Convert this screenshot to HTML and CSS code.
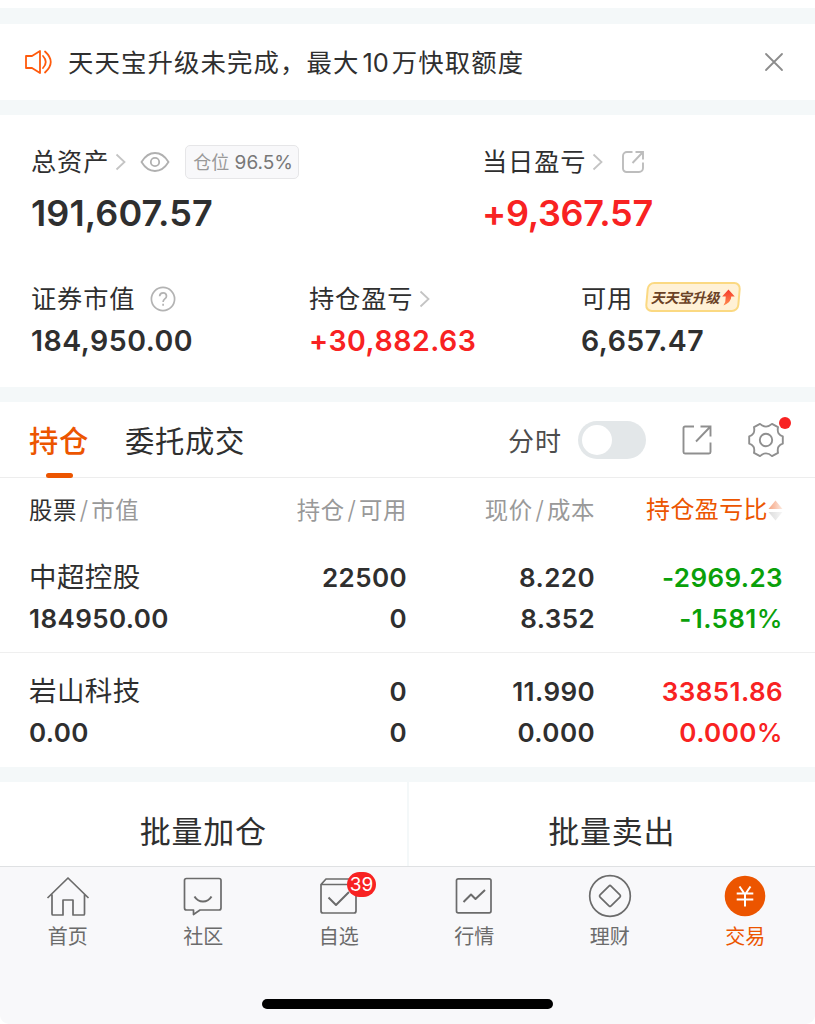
FILE: index.html
```
<!DOCTYPE html>
<html lang="zh-CN">
<head>
  <meta charset="UTF-8">
  <meta name="viewport" content="width=device-width, initial-scale=1.0">
  <title>交易</title>
  <link rel="stylesheet" href="styles.css">
</head>
<body>
  <div class="page">
    <!-- Notice -->
    <div class="notice">
      <svg class="notice-icon" width="28" height="26" viewBox="0 0 28 26" fill="none" stroke="#ff5a0c" stroke-width="1.8" stroke-linecap="round" stroke-linejoin="round">
        <path d="M2 7h6l8-5v22l-8-5H2z"/>
        <path d="M19 7q5.500 6 0 12M21 2.500q11.500 10.500 0 21"/>
      </svg>
      <span class="notice-text">天天宝升级未完成，最大<span class="notice-num">10</span>万快取额度</span>
      <svg class="notice-close" width="20" height="20" viewBox="0 0 20 20" stroke="#8c8c8c" stroke-width="1.8" stroke-linecap="round">
        <path d="M2 2l16 16M18 2L2 18"/>
      </svg>
    </div>

    <!-- Assets -->
    <div class="assets">
      <div class="assets-top">
        <div class="asset">
          <div class="label">
            总资产
            <svg class="arrow" width="12" height="18" viewBox="0 0 12 18" fill="none" stroke="#c4c4c4" stroke-width="1.8"><path d="M1.500 1.500L9.500 9l-8 7.500"/></svg>
            <svg class="eye" width="30" height="22" viewBox="0 0 30 22" fill="none" stroke="#b0b0b0" stroke-width="1.800">
              <path d="M1.500 11Q7 2 15 2t13.500 9Q23 20 15 20T1.500 11z"/>
              <circle cx="15" cy="11" r="4.200"/>
            </svg>
            <span class="ratio"><span class="ratio-name">仓位</span> 96.5%</span>
          </div>
          <div class="value big">191,607.57</div>
        </div>
        <div class="asset">
          <div class="label">
            当日盈亏
            <svg class="arrow" width="12" height="18" viewBox="0 0 12 18" fill="none" stroke="#c4c4c4" stroke-width="1.8"><path d="M1.500 1.500L9.500 9l-8 7.500"/></svg>
            <svg class="share" width="24" height="24" viewBox="0 0 24 24" fill="none" stroke="#bdbdbd" stroke-width="1.900">
              <path d="M11.500 2H6a4 4 0 0 0-4 4v12.500a3.500 3.500 0 0 0 3.500 3.500H18a4 4 0 0 0 4-4v-5.500M11.500 13L21.500 2.500M14.500 2H22v7.500"/>
            </svg>
          </div>
          <div class="value big profit up">+9,367.57</div>
        </div>
      </div>
      <div class="assets-bottom">
        <div class="asset">
          <div class="label">
            证券市值
            <svg class="help" width="26" height="26" viewBox="0 0 26 26" fill="none" stroke="#b3b3b3" stroke-width="1.7">
              <circle cx="13" cy="13" r="11.600"/>
              <path d="M9.600 10.200q.3-3.400 3.500-3.400t3.400 3.200q0 1.600-1.700 2.900T13.100 16"/>
              <path d="M13.100 17.700v2"/>
            </svg>
          </div>
          <div class="value">184,950.00</div>
        </div>
        <div class="asset">
          <div class="label">
            持仓盈亏
            <svg class="arrow" width="12" height="18" viewBox="0 0 12 18" fill="none" stroke="#c4c4c4" stroke-width="1.8"><path d="M1.500 1.500L9.500 9l-8 7.500"/></svg>
          </div>
          <div class="value up">+30,882.63</div>
        </div>
        <div class="asset">
          <div class="label">
            可用
            <span class="upgrade">
              <span class="upgrade-text">天天宝升级</span>
              <svg width="13" height="17" viewBox="0 0 13 17">
                <defs><linearGradient id="up" x1="0" y1="0" x2="0" y2="1"><stop offset="0" stop-color="#f53a2c"/><stop offset="1" stop-color="#ff8a4c"/></linearGradient></defs>
                <path fill="url(#up)" d="M6.500 .5L12.800 7.500H9.300Q9.500 13 1.500 16.500 4 13 3.800 7.500H.2z"/>
              </svg>
            </span>
          </div>
          <div class="value">6,657.47</div>
        </div>
      </div>
    </div>

    <!-- Positions -->
    <div class="positions">
      <div class="tabs">
        <span class="tab active">持仓</span>
        <span class="tab">委托成交</span>
        <div class="tools">
          <span class="tools-text">分时</span>
          <span class="switch"></span>
          <svg class="export" width="30" height="30" viewBox="0 0 30 30" fill="none" stroke="#8f8f8f" stroke-width="1.900">
            <path d="M12 1.500H3A1.500 1.500 0 0 0 1.500 3v24A1.500 1.500 0 0 0 3 28.500h24a1.500 1.500 0 0 0 1.500-1.500v-9.500M14 16.500L28 2M18.500 1.500h10v10"/>
          </svg>
          <span class="gear">
            <svg width="36" height="36" viewBox="0 0 36 36" fill="none" stroke="#8f8f8f" stroke-width="1.900" stroke-linejoin="round">
              <path d="M12 1.900Q15 4.600 18 4.600t6-2.700L30 5.100Q29.200 9.500 30.700 11.600 32 13.600 34.800 14.300v7.400Q32 22.400 30.700 24.400 29.200 26.500 30 30.900L24 34.100Q21 31.400 18 31.400t-6 2.700L6 30.900Q6.800 26.500 5.300 24.400 4 22.400 1.200 21.700v-7.400Q4 13.600 5.300 11.600 6.800 9.500 6 5.100z"/>
              <circle cx="18" cy="18" r="6.200"/>
            </svg>
            <i class="dot"></i>
          </span>
        </div>
      </div>

      <div class="row head">
        <span class="name"><b>股票</b><em>/</em>市值</span>
        <span>持仓<em>/</em>可用</span>
        <span>现价<em>/</em>成本</span>
        <span class="sort">持仓盈亏比
          <svg width="15" height="21" viewBox="0 0 15 21">
            <defs>
              <linearGradient id="s1"><stop offset="0" stop-color="#f5a583"/><stop offset="1" stop-color="#fde9df"/></linearGradient>
              <linearGradient id="s2"><stop offset="0" stop-color="#dcdcdc"/><stop offset="1" stop-color="#f6f6f6"/></linearGradient>
            </defs>
            <path fill="url(#s1)" d="M7.500 .5L14.500 9H.5z"/>
            <path fill="url(#s2)" d="M.5 12h14l-7 8.500z"/>
          </svg>
        </span>
      </div>

      <div class="row stock">
        <div class="name"><p class="cn">中超控股</p><p>184950.00</p></div>
        <div><p>22500</p><p>0</p></div>
        <div><p>8.220</p><p>8.352</p></div>
        <div class="down"><p>-2969.23</p><p>-1.581<span class="percent">%</span></p></div>
      </div>
      <div class="row stock">
        <div class="name"><p class="cn">岩山科技</p><p>0.00</p></div>
        <div><p>0</p><p>0</p></div>
        <div><p>11.990</p><p>0.000</p></div>
        <div class="up"><p>33851.86</p><p>0.000<span class="percent">%</span></p></div>
      </div>
    </div>

    <div class="batch">
      <span class="batch-btn">批量加仓</span>
      <span class="batch-btn">批量卖出</span>
    </div>

    <!-- Bottom bar -->
    <div class="tabbar">
      <div class="nav">
        <div class="nav-item">
          <svg width="44" height="44" viewBox="0 0 44 44" fill="none" stroke="#6b6b6b" stroke-width="1.700" stroke-linejoin="round">
            <path d="M1.500 24L22 4l20.500 20M6 20.500V40q0 1 1 1h10V26h10v15h10.500q1 0 1-1V20.500"/>
          </svg>
          <span>首页</span>
        </div>
        <div class="nav-item">
          <svg width="44" height="44" viewBox="0 0 44 44" fill="none" stroke="#6b6b6b" stroke-width="1.700" stroke-linejoin="round">
            <path d="M5.500 4.500h32.500q2 0 2 2v27.500q0 2-2 2H19L12.500 40.500V36h-7q-2 0-2-2V6.500q0-2 2-2z"/>
            <path stroke-width="2" d="M13.500 22.500q3 5 8.500 5t8.500-5"/>
          </svg>
          <span>社区</span>
        </div>
        <div class="nav-item">
          <svg width="44" height="44" viewBox="0 0 44 44" fill="none" stroke="#6b6b6b" stroke-width="1.700" stroke-linejoin="round">
            <path d="M4 10.500h35V37q0 2-2 2H6q-2 0-2-2V10.500L9 5h25.500l4.500 5.500"/>
            <path stroke-width="2" d="M11.500 23.500l7.500 7.500 13-13"/>
          </svg>
          <span>自选</span>
          <i class="badge">39</i>
        </div>
        <div class="nav-item">
          <svg width="44" height="44" viewBox="0 0 44 44" fill="none" stroke="#6b6b6b" stroke-width="1.700" stroke-linejoin="round">
            <rect x="4.500" y="4.800" width="34.500" height="34" rx="1.800"/>
            <path stroke-width="2" d="M11.500 28l7.500-7.500 4.500 4.500 9.500-9"/>
          </svg>
          <span>行情</span>
        </div>
        <div class="nav-item">
          <svg width="44" height="44" viewBox="0 0 44 44" fill="none" stroke="#6b6b6b" stroke-width="1.700">
            <circle cx="22" cy="22" r="20.300"/>
            <rect x="14.200" y="14.200" width="15.600" height="15.600" rx="1.500" transform="rotate(45 22 22)"/>
          </svg>
          <span>理财</span>
        </div>
        <div class="nav-item active">
          <svg width="44" height="44" viewBox="0 0 44 44" fill="none" stroke="#fff" stroke-width="2">
            <circle cx="22" cy="22" r="20.300" fill="#ec5500" stroke="none"/>
            <path d="M16.500 12.500l5.500 8 5.500-8M13.700 19.500h16.600M13.700 25.500h16.600M22 19.500v13"/>
          </svg>
          <span>交易</span>
        </div>
      </div>
      <div class="home-indicator"></div>
    </div>
  </div>
</body>
</html>
```
FILE: styles.css
```
* {
  box-sizing: border-box;
}

body {
  margin: 0;
  background: #fff;
  color: #2f2f2f;
  font-family: Inter, "Noto Sans CJK SC", sans-serif;
  overflow: hidden;
}

p {
  margin: 0;
}

i, em {
  font-style: normal;
}

svg {
  display: block;
  flex: none;
}

.page {
  height: 1024px;
  padding-top: 8px;
  display: flex;
  flex-direction: column;
}

/* Notice */
.notice {
  height: 107px;
  border-top: 16px solid #f4f8f9;
  border-bottom: 15px solid #f4f8f9;
  padding: 0 31px 0 24px;
  display: flex;
  align-items: center;
}

.notice-text {
  margin-left: 16px;
  padding-top: 2px;
  font-size: 25.4px;
  letter-spacing: 1.1px;
  line-height: 36px;
  white-space: nowrap;
}

.notice-num {
  margin: 0 3px;
  letter-spacing: 0;
}

.notice-close {
  margin-left: auto;
}

/* Assets */
.assets {
  height: 287px;
  padding: 28px 0 0 31px;
  border-bottom: 15px solid #f4f8f9;
}

.assets-top, .assets-bottom {
  display: grid;
}

.assets-top {
  grid-template-columns: 451px 1fr;
}

.assets-bottom {
  grid-template-columns: 278px 272px 1fr;
  margin-top: 33px;
}

.label {
  height: 36px;
  padding-top: 1px;
  display: flex;
  align-items: center;
  font-size: 25.2px;
  letter-spacing: 0.9px;
  line-height: 36px;
  white-space: nowrap;
}

.arrow {
  margin-left: 6px;
}

.eye {
  margin-left: 13px;
}

.share {
  margin-left: 17px;
}

.help {
  margin-left: 15px;
}

.ratio {
  height: 34px;
  margin-left: 15px;
  padding: 0 5px 0 7px;
  border: 1.5px solid #e6e6e8;
  border-radius: 5px;
  background: #f8f8fa;
  color: #777;
  font-size: 19px;
  letter-spacing: 0;
  line-height: 33px;
}

.ratio-name {
  color: #999;
  font-size: 18px;
}

.value {
  height: 48px;
  font-size: 28.5px;
  font-weight: 600;
  letter-spacing: 0.5px;
  line-height: 49px;
}

.value.big {
  height: 68px;
  font-size: 36px;
  letter-spacing: 0.1px;
  line-height: 68px;
}

.value.profit {
  letter-spacing: -0.3px;
}

.up {
  color: #f82222;
}

.down {
  color: #0aa00a;
}

.upgrade {
  height: 30px;
  margin: -4px 0 0 13px;
  padding: 0 3px 0 4px;
  border: 2px solid #fbd982;
  border-radius: 7px;
  background: #fff1d6;
  display: flex;
  align-items: center;
  gap: 1px;
  transform: skewX(-5deg);
}

.upgrade svg {
  transform: skewX(5deg);
}

.upgrade-text {
  color: #6b4226;
  font-size: 14px;
  font-weight: 700;
  letter-spacing: -0.3px;
  line-height: 27px;
  transform: skewX(-8deg);
}

/* Positions */
.positions {
  height: 380px;
  border-bottom: 15px solid #f4f8f9;
}

.tabs {
  height: 76px;
  padding: 0 31px 0 29px;
  border-bottom: 1px solid #ededed;
  display: flex;
  align-items: center;
}

.tab {
  height: 76px;
  font-size: 29.3px;
  letter-spacing: 0.7px;
  line-height: 79px;
  margin-right: 36px;
}

.tab.active {
  position: relative;
  color: #ec5500;
  font-weight: 500;
}

.tab.active::after {
  content: "";
  position: absolute;
  left: 17px;
  bottom: 0;
  width: 27px;
  height: 5px;
  border-radius: 3px;
  background: #ec5500;
}

.tools {
  margin-left: auto;
  display: flex;
  align-items: center;
}

.tools-text {
  color: #4d4d4d;
  font-size: 26px;
  letter-spacing: 1px;
}

.switch {
  width: 68px;
  height: 38px;
  margin-left: 16px;
  padding: 4px;
  border-radius: 19px;
  background: #e3e7e9;
}

.switch::before {
  content: "";
  display: block;
  width: 30px;
  height: 30px;
  border-radius: 50%;
  background: #fff;
}

.export {
  margin-left: 36px;
}

.gear {
  position: relative;
  margin-left: 36px;
}

.dot {
  position: absolute;
  top: -5px;
  right: -7px;
  width: 12px;
  height: 12px;
  border-radius: 50%;
  background: #f82222;
}

.row {
  display: grid;
  grid-template-columns: 200px 178px 188px 188px;
  padding-left: 29px;
  text-align: right;
  white-space: nowrap;
}

.row .name {
  text-align: left;
}

.head {
  height: 60px;
  color: #999;
  font-size: 23.4px;
  letter-spacing: 0.6px;
  line-height: 64px;
}

.head b {
  color: #2f2f2f;
  font-weight: 400;
}

.head em {
  margin: 0 2.5px;
  font-size: 25px;
  font-weight: 300;
}

.sort {
  height: 64px;
  color: #ec5500;
  font-size: 24px;
  letter-spacing: 0.4px;
  display: flex;
  align-items: center;
  justify-content: flex-end;
}

.stock {
  height: 114px;
  padding-top: 19px;
  font-size: 26px;
  font-weight: 600;
  letter-spacing: 0.4px;
  line-height: 41px;
}

.stock + .stock {
  padding-top: 18px;
  border-top: 1px solid #efefef;
}

.stock .cn {
  font-size: 27.5px;
  font-weight: 400;
}

.percent {
  font-weight: 500;
}

.batch {
  height: 84px;
  display: flex;
}

.batch-btn {
  flex: 1;
  font-size: 31px;
  letter-spacing: 0.8px;
  line-height: 100px;
  text-align: center;
}

.batch-btn + .batch-btn {
  border-left: 2px solid #f4f8f9;
}

/* Bottom bar */
.tabbar {
  height: 158px;
  border-top: 1px solid #dfe1e3;
  border-radius: 0 0 9px 9px;
  background: #f8f8fa;
}

.nav {
  height: 132px;
  padding-right: 2px;
  display: flex;
}

.nav-item {
  position: relative;
  flex: 1;
  padding-top: 7px;
  display: flex;
  flex-direction: column;
  align-items: center;
  color: #6b6b6b;
  font-size: 20px;
  line-height: 38px;
}

.nav-item.active {
  color: #ec5500;
}

.badge {
  position: absolute;
  top: 5px;
  left: 76px;
  width: 29px;
  height: 25px;
  border-radius: 13px;
  background: #f82222;
  color: #fff;
  font-size: 19px;
  line-height: 25px;
  text-align: center;
}

.home-indicator {
  width: 291px;
  height: 10px;
  margin: 0 auto;
  border-radius: 5px;
  background: #000;
}
```
